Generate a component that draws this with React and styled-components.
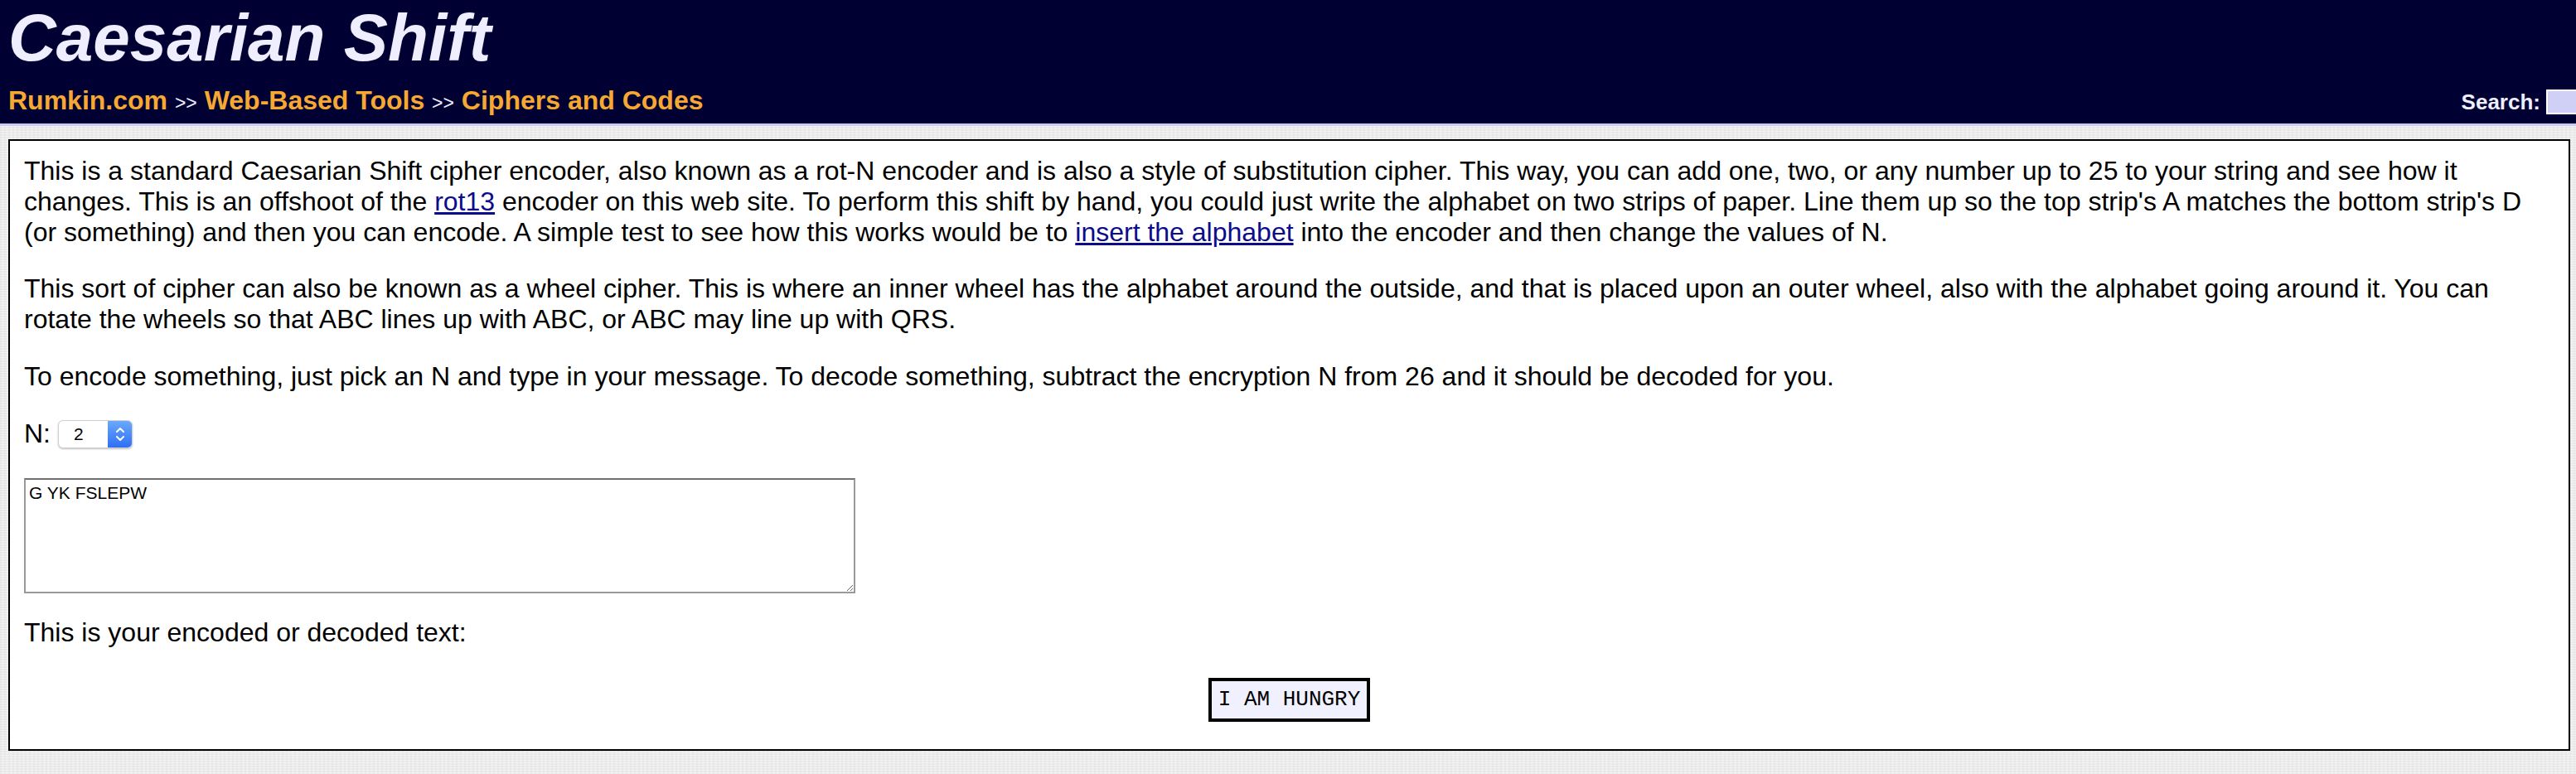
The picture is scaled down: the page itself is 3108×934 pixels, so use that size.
import React from "react";
import styled, { createGlobalStyle } from "styled-components";

const Global = createGlobalStyle`
  html, body {
    margin: 0;
    padding: 0;
    overflow: hidden;
  }
  body {
    background-color: #ececec;
    background-image:
      repeating-linear-gradient(0deg, rgba(255,255,255,0.35) 0px, rgba(255,255,255,0.35) 1px, transparent 1px, transparent 3px),
      repeating-linear-gradient(90deg, rgba(0,0,0,0.025) 0px, rgba(0,0,0,0.025) 2px, transparent 2px, transparent 5px);
    font-family: "Liberation Sans", Arial, sans-serif;
    color: #000;
  }
`;

const Header = styled.header`
  background: #000033;
  height: 149px;
  border-bottom: 3px solid #ccccee;
  padding-left: 10px;
  box-sizing: content-box;
  overflow: hidden;
  display: flex;
  flex-direction: column;
`;

const Title = styled.h1`
  margin: 0;
  font-family: "Liberation Sans", Arial, sans-serif;
  font-size: 80px;
  font-weight: bold;
  font-style: italic;
  line-height: 92px;
  color: #eeeeff;
`;

const NavRow = styled.div`
  margin-top: 11px;
  display: flex;
  align-items: center;
  justify-content: space-between;
`;

const Crumbs = styled.div`
  font-size: 32px;
  font-weight: bold;
  line-height: 37px;
  color: #f6a833;
`;

const Sep = styled.span`
  font-size: 23px;
  font-weight: normal;
  color: #eeeeff;
`;

const SearchGroup = styled.form`
  display: flex;
  align-items: center;
  gap: 7px;
  margin: 0;
`;

const SearchLabel = styled.label`
  font-size: 26px;
  font-weight: bold;
  color: #eeeeff;
  line-height: 30px;
`;

const SearchInput = styled.input`
  width: 36px;
  height: 30px;
  box-sizing: border-box;
  border: 2px solid #ffffff;
  border-right: none;
  background: #d0d0f6;
  padding: 0;
  outline: none;
`;

const Content = styled.main`
  margin: 16px 7px 0 10px;
  border: 2px solid #000;
  background: #ffffff;
  padding: 18px 17px 17px 17px;
`;

const Para = styled.p`
  margin: 0 0 32px 0;
  font-size: 32px;
  line-height: 36.8px;
`;

const Link = styled.a`
  color: #0b0b8c;
  text-decoration: underline;
`;

const NRow = styled.div`
  display: flex;
  align-items: center;
  height: 38px;
  margin-bottom: 34px;
  font-size: 32px;
`;

const NLabel = styled.span`
  margin-right: 9px;
`;

const SelectShell = styled.span`
  display: inline-flex;
  width: 90px;
  height: 34px;
  box-sizing: border-box;
  border-radius: 6px;
  border: 1px solid #cfcfcf;
  box-shadow: 0 1px 2px rgba(0, 0, 0, 0.25);
  background: #fff;
  overflow: hidden;
`;

const NativeSelect = styled.select`
  appearance: none;
  -webkit-appearance: none;
  border: none;
  background: transparent;
  flex: 1;
  padding: 0 0 0 18px;
  margin: 0;
  font-family: "Liberation Sans", Arial, sans-serif;
  font-size: 21px;
  color: #000;
  outline: none;
`;

const Stepper = styled.span`
  width: 29px;
  display: flex;
  align-items: center;
  justify-content: center;
  background: linear-gradient(#6aa9fb, #2f6ff5);
`;

const TextArea = styled.textarea`
  display: block;
  width: 1003px;
  height: 139px;
  box-sizing: border-box;
  margin: 0 0 29px 0;
  padding: 4px 4px;
  border: 2px solid #9a9a9a;
  border-top-color: #707070;
  font-family: "Liberation Sans", Arial, sans-serif;
  font-size: 21px;
  line-height: 24px;
  color: #000;
  background: #fff;
  outline: none;
`;

const Result = styled.div`
  display: flex;
  justify-content: center;
  margin: 36px 0 16px 0;
`;

const ResultBox = styled.div`
  border: 4px solid #000;
  background: #f0f0ff;
  padding: 8px 8px;
  font-family: "Liberation Mono", "Courier New", monospace;
  font-size: 26px;
  line-height: 29px;
  white-space: pre;
`;

const ResultLabel = styled.p`
  margin: 0;
  font-size: 32px;
  line-height: 36.8px;
`;

export default function App() {
  return (
    <>
      <Global />
      <Header>
        <Title>Caesarian Shift</Title>
        <NavRow>
          <Crumbs>
            Rumkin.com <Sep>&gt;&gt;</Sep> Web-Based Tools <Sep>&gt;&gt;</Sep> Ciphers and Codes
          </Crumbs>
          <SearchGroup onSubmit={(e) => e.preventDefault()}>
            <SearchLabel htmlFor="q">Search:</SearchLabel>
            <SearchInput id="q" type="text" />
          </SearchGroup>
        </NavRow>
      </Header>
      <Content>
        <Para>
          This is a standard Caesarian Shift cipher encoder, also known as a rot-N encoder and is also a style of
          substitution cipher. This way, you can add one, two, or any number up to 25 to your string and see how it
          changes. This is an offshoot of the <Link href="#rot13">rot13</Link> encoder on this web site. To perform
          this shift by hand, you could just write the alphabet on two strips of paper. Line them up so the top
          strip's A matches the bottom strip's D (or something) and then you can encode. A simple test to see how
          this works would be to <Link href="#alpha">insert the alphabet</Link> into the encoder and then change the
          values of N.
        </Para>
        <Para>
          This sort of cipher can also be known as a wheel cipher. This is where an inner wheel has the alphabet
          around the outside, and that is placed upon an outer wheel, also with the alphabet going around it. You can
          rotate the wheels so that ABC lines up with ABC, or ABC may line up with QRS.
        </Para>
        <Para>
          To encode something, just pick an N and type in your message. To decode something, subtract the encryption
          N from 26 and it should be decoded for you.
        </Para>
        <NRow>
          <NLabel>N:</NLabel>
          <SelectShell>
            <NativeSelect defaultValue="2">
              {Array.from({ length: 26 }, (_, i) => (
                <option key={i} value={String(i)}>
                  {i}
                </option>
              ))}
            </NativeSelect>
            <Stepper>
              <svg width="14" height="22" viewBox="0 0 14 22" fill="none" stroke="#fff" strokeWidth="2" strokeLinecap="round" strokeLinejoin="round">
                <polyline points="3,8 7,4 11,8" />
                <polyline points="3,14 7,18 11,14" />
              </svg>
            </Stepper>
          </SelectShell>
        </NRow>
        <TextArea defaultValue="G YK FSLEPW" />
        <ResultLabel>This is your encoded or decoded text:</ResultLabel>
        <Result>
          <ResultBox>I AM HUNGRY</ResultBox>
        </Result>
      </Content>
    </>
  );
}
